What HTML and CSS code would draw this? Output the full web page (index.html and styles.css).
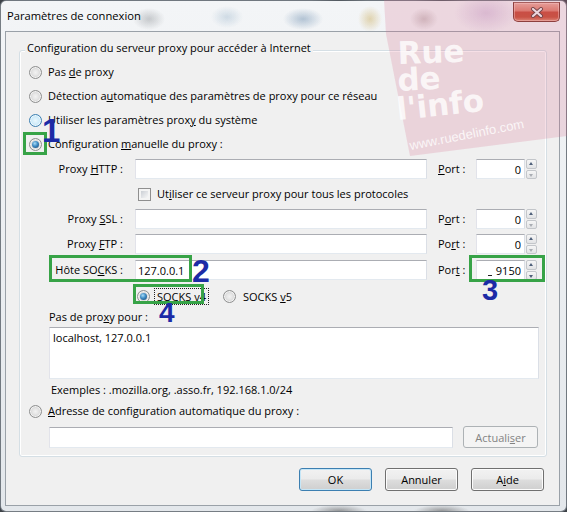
FILE: index.html
```html
<!DOCTYPE html>
<html lang="fr">
<head>
<meta charset="utf-8">
<title>Paramètres de connexion</title>
<link rel="stylesheet" href="styles.css">
</head>
<body>
<div class="window">
  <div class="titlebar">
    <span class="title">Paramètres de connexion</span>
    <div class="close-btn">
      <svg width="14" height="11" viewBox="0 0 14 11">
        <path d="M3 2 L11 9 M11 2 L3 9" stroke="#5b3a36" stroke-width="4" stroke-linecap="round"/>
        <path d="M3 2 L11 9 M11 2 L3 9" stroke="#f4f4f4" stroke-width="2.2" stroke-linecap="round"/>
      </svg>
    </div>
  </div>

  <div class="client">
    <div class="group">
      <span class="legend">Configuration du serveur proxy pour accéder à Internet</span>

      <div class="opt first"><span class="radio"></span><span>Pas <u>d</u>e proxy</span></div>
      <div class="opt"><span class="radio"></span><span>Détection a<u>u</u>tomatique des paramètres de proxy pour ce réseau</span></div>
      <div class="opt"><span class="radio hot"></span><span>Utiliser les paramètres prox<u>y</u> du système</span></div>
      <div class="opt"><span class="radio on"></span><span>Configuration <u>m</u>anuelle du proxy :</span></div>

      <div class="manual">
        <div class="row r-http">
          <label class="lbl">Proxy <u>H</u>TTP :</label>
          <input class="field host" type="text" value="">
          <label class="plbl"><u>P</u>ort :</label>
          <input class="field port" type="text" value="0">
          <div class="spin"><span class="up"></span><span class="down off"></span></div>
        </div>
        <div class="check-row">
          <span class="check"></span><span>Ut<u>i</u>liser ce serveur proxy pour tous les protocoles</span>
        </div>
        <div class="row">
          <label class="lbl">Proxy <u>S</u>SL :</label>
          <input class="field host" type="text" value="">
          <label class="plbl">P<u>o</u>rt :</label>
          <input class="field port" type="text" value="0">
          <div class="spin"><span class="up"></span><span class="down off"></span></div>
        </div>
        <div class="row r-ftp">
          <label class="lbl">Proxy <u>F</u>TP :</label>
          <input class="field host" type="text" value="">
          <label class="plbl">Po<u>r</u>t :</label>
          <input class="field port" type="text" value="0">
          <div class="spin"><span class="up"></span><span class="down off"></span></div>
        </div>
        <div class="row r-socks">
          <label class="lbl">Hôte SO<u>C</u>KS :</label>
          <input class="field host" type="text" value="127.0.0.1">
          <label class="plbl">Por<u>t</u> :</label>
          <div class="port-wrap">
            <input class="field port" type="text" value="9150">
            <span class="caret"></span>
          </div>
          <div class="spin"><span class="up"></span><span class="down"></span></div>
        </div>
        <div class="version-row">
          <span class="radio on"></span><span class="vlabel focus">SOC<u>K</u>S v4</span>
          <span class="radio v5"></span><span class="vlabel">SOCKS <u>v</u>5</span>
        </div>
      </div>

      <div class="noproxy">
        <div class="np-label">Pas de pro<u>x</u>y pour :</div>
        <textarea class="np-list" rows="3">localhost, 127.0.0.1</textarea>
        <div class="examples">Exemples : .mozilla.org, .asso.fr, 192.168.1.0/24</div>
      </div>

      <div class="opt auto"><span class="radio"></span><span><u>A</u>dresse de configuration automatique du proxy :</span></div>

      <div class="url-row">
        <input class="field url" type="text" value="">
        <button class="btn disabled" type="button">Actuali<u>s</u>er</button>
      </div>
    </div>

    <div class="actions">
      <button class="btn default" type="button">OK</button>
      <button class="btn" type="button">Annuler</button>
      <button class="btn" type="button">A<u>i</u>de</button>
    </div>
  </div>
</div>

<!-- site watermark -->
<div class="wm"></div>
<div class="wm-text">
  <span class="wm-line l1">Rue</span>
  <span class="wm-line l2">de</span>
  <span class="wm-line l3">l'info</span>
</div>
<span class="wm-url">www.ruedelinfo.com</span>

<!-- step annotations -->
<div class="box b1"></div>
<div class="box b2"></div>
<div class="box b3"></div>
<div class="box b4"></div>
<span class="num n1">1</span>
<span class="num n2">2</span>
<span class="num n3">3</span>
<span class="num n4">4</span>
</body>
</html>
```

FILE: styles.css
```css
* { box-sizing: border-box; }

html, body { margin: 0; padding: 0; }

body {
  position: relative;
  width: 567px;
  height: 512px;
  overflow: hidden;
  background: #3d4248;
  font-family: "Open Sans", "Noto Sans", sans-serif;
  font-size: 11px;
  line-height: 14px;
  color: #000;
}

u { text-underline-offset: 1px; }

/* ---------- window frame (glass) ---------- */
.window {
  width: 567px;
  height: 512px;
  border: 1px solid rgba(35, 45, 55, 0.6);
  border-radius: 6px;
  display: flex;
  flex-direction: column;
  background:
    radial-gradient(16px 11px at 148px 18px, rgba(115, 120, 125, 0.35), transparent),
    radial-gradient(16px 11px at 226px 16px, rgba(140, 170, 195, 0.35), transparent),
    radial-gradient(20px 11px at 302px 18px, rgba(100, 135, 170, 0.45), transparent),
    radial-gradient(12px 13px at 369px 18px, rgba(205, 178, 105, 0.5), transparent),
    radial-gradient(14px 11px at 423px 18px, rgba(140, 115, 115, 0.35), transparent),
    radial-gradient(32px 20px at 485px 12px, rgba(185, 150, 200, 0.4), transparent),
    radial-gradient(28px 6px at 338px 510px, rgba(70, 70, 70, 0.5), transparent),
    radial-gradient(28px 6px at 441px 510px, rgba(70, 70, 70, 0.5), transparent),
    linear-gradient(#f3f5f7, #e3e7eb);
}

.titlebar {
  height: 30px;
  flex: none;
  display: flex;
  align-items: flex-start;
}

.title {
  flex: 1;
  margin: 8px 0 0 6px;
  font-size: 11.2px;
  color: #000;
}

.close-btn {
  width: 47px;
  height: 20px;
  margin: 1px 6px 0 0;
  border: 1px solid #7a3328;
  border-top-color: #9a5a50;
  border-radius: 0 0 5px 5px;
  background: linear-gradient(#eaaa9c 0%, #dd7e6b 42%, #c64631 52%, #c54a31 78%, #df8a70 100%);
  box-shadow: inset 0 0 0 1px rgba(255, 220, 210, 0.45);
  display: flex;
  align-items: center;
  justify-content: center;
}

/* ---------- dialog client area ---------- */
.client {
  flex: none;
  height: 475px;
  margin: 0 6px 0 4px;
  border: 1px solid #9aa1a8;
  background: #f0f0f0;
  display: flex;
  flex-direction: column;
}

.group {
  margin: 18px 12px 0 13px;
  padding: 0 0 8px 9px;
  border: 1px solid #d5dfe5;
  border-radius: 3px;
  box-shadow: inset 0 0 0 1px #fff;
}

.legend {
  display: block;
  width: fit-content;
  margin: -10px 0 0 -4px;
  padding: 0 2px;
  background: #f0f0f0;
}

.opt {
  display: flex;
  align-items: center;
  height: 24px;
  white-space: nowrap;
}
.opt.first { margin-top: 5px; }

/* ---------- radio / checkbox ---------- */
.radio {
  position: relative;
  flex: none;
  width: 13px;
  height: 13px;
  margin-right: 6px;
  border-radius: 50%;
  border: 1px solid #8e8f8f;
  background: radial-gradient(circle at 50% 50%, #f2f2f2 0, #e6e6e6 35%, #cfcfcf 75%, #dedede 100%);
  box-shadow: inset 0 0 0 1px rgba(255, 255, 255, 0.7);
}
.radio.hot {
  border-color: #3c7fb1;
  background: radial-gradient(circle at 50% 50%, #eaf7fd 0, #c9e9f9 60%, #a9dbf5 100%);
}
.radio.on::after {
  content: "";
  position: absolute;
  left: 2px;
  top: 2px;
  width: 7px;
  height: 7px;
  border-radius: 50%;
  background: radial-gradient(circle at 40% 35%, #a8dcf7 0, #3f8bc4 45%, #143f6b 100%);
}

.check {
  flex: none;
  width: 13px;
  height: 13px;
  margin-right: 6px;
  border: 1px solid #8f8f8f;
  padding: 2px;
  background: linear-gradient(135deg, #cbcfd5, #f7f7f7) content-box, #f4f4f4;
}

/* ---------- manual proxy grid ---------- */
.manual { margin-left: 19px; }

.row {
  display: flex;
  align-items: center;
  height: 20px;
}
.row.r-http { margin-top: 3px; }
.row.r-ftp { margin-top: 5px; }
.row.r-socks { margin-top: 6px; }

.lbl {
  width: 75px;
  margin-right: 12px;
  text-align: right;
  white-space: nowrap;
}

.plbl {
  width: 38px;
  margin-left: 11px;
  white-space: nowrap;
}

.field {
  display: block;
  height: 20px;
  margin: 0;
  padding: 0 2px;
  border: 1px solid;
  border-color: #abadb3 #dbdfe6 #e3e9ef #e2e3ea;
  background: #fff;
  font-family: inherit;
  font-size: 11px;
  color: #000;
  outline: none;
}

.host { width: 292px; }

.port {
  width: 49px;
  padding-right: 3px;
  text-align: right;
}

.port-wrap { position: relative; }
.caret {
  position: absolute;
  left: 12px;
  top: 15px;
  width: 4px;
  height: 1px;
  background: #222;
}

.spin {
  width: 11px;
  height: 20px;
  margin-left: 1px;
  display: flex;
  flex-direction: column;
  gap: 1px;
}
.spin span {
  position: relative;
  flex: 1;
  border: 1px solid #c3c6ca;
  border-radius: 2px;
  background: linear-gradient(#f6f6f6, #e2e3e5);
}
.spin span::after {
  content: "";
  position: absolute;
  left: 2px;
  top: 2px;
  border-left: 2.5px solid transparent;
  border-right: 2.5px solid transparent;
}
.spin .up::after { border-bottom: 3px solid #4f607a; }
.spin .down::after { border-top: 3px solid #4f607a; top: 3px; }
.spin .down.off::after { border-top-color: #a9adb3; }

.check-row {
  height: 30px;
  display: flex;
  align-items: center;
  padding-left: 90px;
  white-space: nowrap;
}

.version-row {
  height: 20px;
  margin-top: 6px;
  padding-left: 89px;
  display: flex;
  align-items: center;
  white-space: nowrap;
}
.version-row .radio { margin-right: 4px; }
.version-row .v5 { margin-left: 14px; }

.vlabel {
  border: 1px dotted transparent;
  padding: 0 2px;
  line-height: 15px;
}
.vlabel.focus { border-color: #222; }

/* ---------- no-proxy list ---------- */
.noproxy { margin-left: 20px; }

.np-label { margin-top: 4px; }

.np-list {
  display: block;
  width: 490px;
  height: 52px;
  margin: 3px 0 0;
  padding: 3px 3px;
  border: 1px solid;
  border-color: #abadb3 #dbdfe6 #e3e9ef #e2e3ea;
  background: #fff;
  font-family: inherit;
  font-size: 11px;
  line-height: 14px;
  color: #000;
  resize: none;
  overflow: hidden;
  outline: none;
}

.examples {
  margin-top: 4px;
  padding-left: 2px;
}

.opt.auto { margin-top: 2px; }

.url-row {
  display: flex;
  align-items: center;
  height: 22px;
  margin: 3px 0 0 20px;
}
.url { width: 404px; height: 21px; }

/* ---------- push buttons ---------- */
.btn {
  width: 73px;
  height: 23px;
  margin: 0;
  padding: 0;
  border: 1px solid #707070;
  border-radius: 3px;
  background: linear-gradient(#f2f2f2 0%, #ebebeb 48%, #dddddd 52%, #cfcfcf 100%);
  box-shadow: inset 0 0 0 1px #fcfcfc;
  font-family: inherit;
  font-size: 11px;
  color: #000;
}
.btn.default {
  border-color: #3c7fb1;
  box-shadow: inset 0 0 0 1px #c5e6f7;
}
.btn.disabled {
  width: 75px;
  height: 22px;
  margin-left: 10px;
  border-color: #adb2b5;
  background: #f4f4f4;
  box-shadow: none;
  color: #838383;
}

.actions {
  display: flex;
  justify-content: flex-end;
  gap: 13px;
  margin-top: 11px;
  padding-right: 15px;
}

/* ---------- watermark ---------- */
.wm {
  position: absolute;
  left: 0;
  top: 0;
  width: 567px;
  height: 160px;
  background: rgba(214, 108, 140, 0.22);
  clip-path: polygon(384px 0, 567px 0, 567px 136px, 410px 156px, 386px 34px);
  pointer-events: none;
}

.wm-text {
  position: absolute;
  left: 398px;
  top: 40px;
  font-family: "DejaVu Sans", sans-serif;
  font-weight: bold;
  font-size: 31px;
  line-height: 26px;
  color: rgba(255, 255, 255, 0.8);
  pointer-events: none;
}
.wm-line { display: block; transform-origin: left bottom; }
.wm-line.l1 { transform: rotate(-2deg); }
.wm-line.l2 { transform: rotate(-3deg); margin-top: 1px; }
.wm-line.l3 { transform: rotate(-6deg); margin-top: 3px; }

.wm-url {
  position: absolute;
  left: 411px;
  top: 139px;
  font-family: "Liberation Sans", Arial, sans-serif;
  font-size: 13px;
  line-height: 14px;
  color: rgba(255, 255, 255, 0.8);
  transform: rotate(-11deg);
  transform-origin: left bottom;
  white-space: nowrap;
  pointer-events: none;
}

/* ---------- step annotations ---------- */
.box {
  position: absolute;
  border: 3px solid #37a347;
  pointer-events: none;
}
.b1 { left: 23px; top: 132px; width: 24px; height: 23px; }
.b2 { left: 49px; top: 255px; width: 143px; height: 27px; }
.b3 { left: 469px; top: 255px; width: 76px; height: 27px; }
.b4 { left: 133px; top: 284px; width: 71px; height: 20px; }

.num {
  position: absolute;
  font-family: "Liberation Sans", Arial, sans-serif;
  font-weight: bold;
  line-height: 1;
  color: #1c2ba6;
  pointer-events: none;
}
.n1 { left: 42px; top: 114px; font-size: 33px; }
.n2 { left: 192px; top: 255px; font-size: 32px; }
.n3 { left: 482px; top: 276px; font-size: 29px; }
.n4 { left: 159px; top: 299px; font-size: 28px; }
```
